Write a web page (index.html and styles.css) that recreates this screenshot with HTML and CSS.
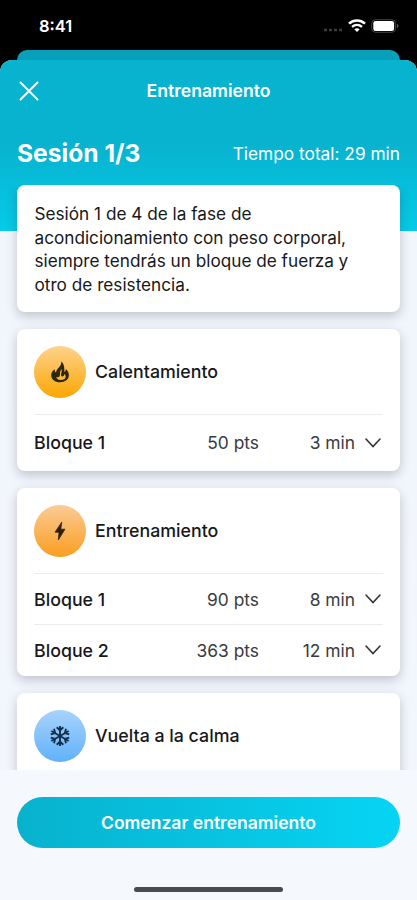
FILE: index.html
```html
<!DOCTYPE html>
<html lang="es">
<head>
<meta charset="utf-8">
<title>Entrenamiento</title>
<link rel="stylesheet" href="styles.css">
</head>
<body>
<div class="phone">
  <div class="status">
    <span class="time">8:41</span>
    <div class="indicators">
      <svg class="dots" width="20" height="4" viewBox="0 0 20 4"><path d="M1 2h3M6 2h3M11 2h3M16 2h3" stroke="#3c3c3c" stroke-width="2.400"/></svg>
      <svg class="wifi" width="18" height="14" viewBox="0 0 18 14" fill="none" stroke="#fff"><path d="M1 4.600C5.600.4 12.400.4 17 4.600" stroke-width="2.600"/><path d="M4 7.900c3-2.600 7-2.600 10 0" stroke-width="2.300"/><path d="M6.300 10.200c1.700-1.400 3.700-1.400 5.400 0L9 13z" fill="#fff" stroke="none"/></svg>
      <svg width="28" height="14" viewBox="0 0 28 14"><rect x=".7" y=".7" width="24" height="12.600" rx="4" fill="none" stroke="#444"/><rect x="2.300" y="2.100" width="20.800" height="9.800" rx="2.200" fill="#fff"/><path d="M26 5v4q1.600-.6 1.600-2T26 5" fill="#555"/></svg>
    </div>
  </div>
  <div class="back-sheet"></div>
  <div class="sheet">
    <header class="hero">
      <div class="nav">
        <svg class="close" width="20" height="20" viewBox="0 0 20 20"><path d="M1.500 1.500l17 17M18.500 1.500l-17 17" stroke="#fff" stroke-width="1.900" stroke-linecap="round"/></svg>
        <h1>Entrenamiento</h1>
      </div>
      <div class="summary"><h2>Sesión 1/3</h2><span class="total">Tiempo total: 29 min</span></div>
    </header>
    <main class="content">
      <p class="card intro">Sesión 1 de 4 de la fase de<br>acondicionamiento con peso corporal,<br>siempre tendrás un bloque de fuerza y<br>otro de resistencia.</p>
      <section class="card warmup">
        <div class="card-head"><span class="badge amber"><svg width="22" height="24" viewBox="0 0 22 24"><path fill="#2f270c" fill-rule="evenodd" d="M12.300 1.500C12.600 4.500 11 6.300 9.200 8.200 7.800 9.700 7 11 7.100 12.800 6 12 5.600 10.800 5.800 9.300 3.300 11 2.200 13 2.200 15.300c0 4.300 3.800 7 8.800 7s8.900-2.900 8.900-7.200c0-2.500-1.200-4.600-3.100-6.200.1 1.500-.4 2.400-1.500 3C15.600 8.200 15.200 3.800 12.300 1.500ZM12.300 9c.9 2 .2 3.400-.2 4.700-.4 1.500.2 2.700 1.300 2.800 1.300.1 2-1.100 1.700-2.500 1.500 1 1.900 2.300 1.400 3.700-.7 1.500-2.500 2.300-4.900 2.200-2.700-.1-4.200-1.400-4.300-3.200 1 .8 2.600.8 3.300-.4.9-1.800-.2-3.800 1.700-7.300Z"/></svg></span><h3>Calentamiento</h3></div>
        <div class="row"><b>Bloque 1</b><span class="pts">50 pts</span><span class="min">3 min</span><svg class="chev" width="16" height="10" viewBox="0 0 16 10"><path d="M1 1l7 7.500L15 1"/></svg></div>
      </section>
      <section class="card training">
        <div class="card-head"><span class="badge orange"><svg width="24" height="24" viewBox="0 0 24 24"><path fill="#2b2008" stroke="#2b2008" stroke-width=".7" stroke-linejoin="round" d="M13.800 3L7 13.200h4L10.300 21l6.700-10.800h-4.200z"/></svg></span><h3>Entrenamiento</h3></div>
        <div class="row"><b>Bloque 1</b><span class="pts">90 pts</span><span class="min">8 min</span><svg class="chev" width="16" height="10" viewBox="0 0 16 10"><path d="M1 1l7 7.500L15 1"/></svg></div>
        <div class="row"><b>Bloque 2</b><span class="pts">363 pts</span><span class="min">12 min</span><svg class="chev" width="16" height="10" viewBox="0 0 16 10"><path d="M1 1l7 7.500L15 1"/></svg></div>
      </section>
      <section class="card calm">
        <div class="card-head"><span class="badge blue"><svg width="24" height="24" viewBox="-12 -12 24 24"><g fill="none" stroke="#14304c" stroke-width="1.900"><g id="axis"><path d="M0-10V10M-3.300-8.800L0-5.600 3.300-8.800M-3.300 8.800L0 5.600 3.300 8.800"/></g><use href="#axis" transform="rotate(60)"/><use href="#axis" transform="rotate(120)"/></g></svg></span><h3>Vuelta a la calma</h3></div>
      </section>
    </main>
    <footer class="footer">
      <button class="start">Comenzar entrenamiento</button>
      <div class="home"></div>
    </footer>
  </div>
</div>
</body>
</html>
```
FILE: styles.css
```css
* { box-sizing: border-box; margin: 0; }
body { background: #000; font-family: Inter, "Liberation Sans", sans-serif; color: #17181a; }
.phone { width: 417px; height: 900px; overflow: hidden; display: flex; flex-direction: column; }
.status { height: 50px; flex: none; padding: 2px 18px 0 39px; display: flex; justify-content: space-between; align-items: center; color: #fff; }
.time { font-size: 16.5px; font-weight: 600; }
.indicators { display: flex; align-items: center; gap: 5px; }
.dots { margin-top: 8px; }
.back-sheet { height: 22px; flex: none; margin: 0 17px; background: #079fb9; border-radius: 10px 10px 0 0; }
.sheet { flex: 1; min-height: 0; margin-top: -12px; border-radius: 12px 12px 0 0; background: #f5f8fe; overflow: hidden; display: flex; flex-direction: column; }
.hero { height: 171px; flex: none; background: linear-gradient(#08b3cf 0, #08b3cf 50%, #05cbe8 100%); color: #fff; }
.nav { height: 61px; display: grid; grid-template-columns: 20px 1fr 20px; align-items: center; padding: 0 19px; }
h1 { font-size: 17.6px; font-weight: 600; text-align: center; }
.summary { display: flex; justify-content: space-between; align-items: center; padding: 0 17px; height: 64px; }
h2 { font-size: 24.6px; font-weight: 700; }
.total { font-size: 17.3px; }
.content { flex: 1; min-height: 0; margin-top: -46px; padding: 0 17px; overflow: hidden; display: flex; flex-direction: column; gap: 17px; background: linear-gradient(transparent 46px, #f1f5fc 46px, #f3f6fd 100%); }
.card { flex: none; background: #fff; border-radius: 8px; padding: 0 17px; box-shadow: 0 4px 11px rgba(40, 48, 70, .25); }
.intro { height: 127px; padding-top: 17px; padding-left: 17.5px; font-size: 17.2px; line-height: 23.5px; }
.warmup { height: 142px; }
.training { height: 188px; }
.calm { height: 142px; }
.card-head { height: 85px; display: flex; align-items: center; gap: 9px; }
.badge { width: 52px; height: 52px; border-radius: 50%; display: flex; align-items: center; justify-content: center; }
.amber { background: linear-gradient(#fed28d, #fba602); }
.orange { background: linear-gradient(#fbcb95, #fa9e20); }
.blue { background: linear-gradient(#a8d3fc, #61b1fb); }
h3 { font-size: 17.8px; font-weight: 500; }
.row { height: 51px; border-top: 1px solid #ebecee; display: grid; grid-template-columns: 1fr auto 96px 28px; align-items: center; font-size: 17.4px; }
.warmup .row { height: 56px; }
.row b { font-weight: 500; font-size: 17.8px; }
.pts, .min { color: #3a3b3e; text-align: right; }
.chev { margin-left: 10px; overflow: visible; fill: none; stroke: #333; stroke-width: 1.6; stroke-linecap: round; }
.footer { height: 130px; flex: none; background: #f5f9fe; padding: 27px 17px 0; display: flex; flex-direction: column; align-items: center; }
.start { width: 100%; height: 51px; flex: none; border: 0; border-radius: 26px; background: linear-gradient(90deg, #08b2cd, #06d4f4); color: #fff; font: 600 17.55px Inter, sans-serif; }
.home { margin-top: 39px; width: 149px; height: 5px; flex: none; border-radius: 3px; background: #4c4c4e; }
```
